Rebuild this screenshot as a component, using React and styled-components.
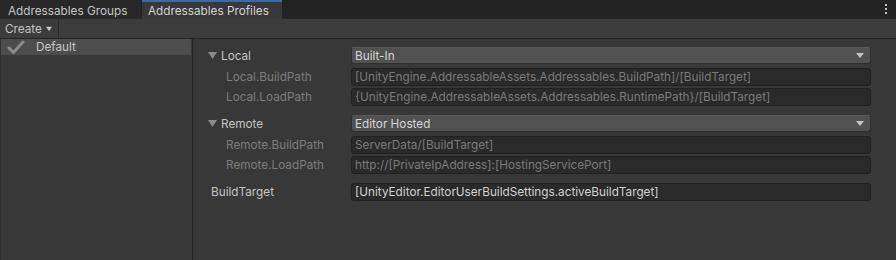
import React from "react";
import styled, { createGlobalStyle } from "styled-components";

const Global = createGlobalStyle`
  html, body { margin: 0; padding: 0; background: #383838; }
  body { font-family: Inter, "Noto Sans", sans-serif; font-size: 11.75px; color: #c4c4c4; }
  * { box-sizing: border-box; }
`;

const Window = styled.div`
  width: 896px;
  height: 260px;
  display: flex;
  flex-direction: column;
  background: #383838;
  overflow: hidden;
`;

const TabBar = styled.div`
  height: 19px;
  display: flex;
  align-items: stretch;
  background: #232323;
  position: relative;
`;

const Tab = styled.div`
  display: flex;
  align-items: center;
  padding-left: ${(p) => (p.$active ? "6px" : "8px")};
  padding-right: 14px;
  background: ${(p) => (p.$active ? "#383838" : "#282828")};
  color: ${(p) => (p.$active ? "#d2d2d2" : "#c4c4c4")};
  border-top: 2px solid ${(p) => (p.$active ? "#3e6aa4" : "#282828")};
  width: ${(p) => p.$w}px;
  white-space: nowrap;
  margin-right: ${(p) => (p.$active ? 0 : 1)}px;
`;

const Kebab = styled.div`
  position: absolute;
  right: 9px;
  top: 4px;
  display: flex;
  flex-direction: column;
  gap: 2px;
  span {
    width: 2px;
    height: 2px;
    background: #bdbdbd;
  }
`;

const Toolbar = styled.div`
  height: 20px;
  display: flex;
  align-items: stretch;
  background: #3c3c3c;
  border-bottom: 1px solid #232323;
`;

const ToolButton = styled.div`
  display: flex;
  align-items: center;
  gap: 4px;
  padding: 1px 6px 0 5px;
  width: 59px;
  border-right: 1px solid #2a2a2a;
  color: #c4c4c4;
`;

const Main = styled.div`
  flex: 1;
  display: flex;
  min-height: 0;
`;

const ListPane = styled.div`
  width: 193px;
  border-left: 1px solid #2e2e2e;
  border-right: 1px solid #232323;
  padding-right: 1px;
  display: flex;
  flex-direction: column;
`;

const ListItem = styled.div`
  height: 16px;
  display: flex;
  align-items: center;
  gap: 11px;
  padding-left: 6px;
  background: ${(p) => (p.$selected ? "#4d4d4d" : "transparent")};
  color: #c4c4c4;
`;

const Inspector = styled.div`
  flex: 1;
  padding: 8px 25px 0 0;
  display: flex;
  flex-direction: column;
`;

const Group = styled.div`
  display: flex;
  flex-direction: column;
  gap: 2px;
  margin-bottom: ${(p) => p.$mb}px;
`;

const Row = styled.div`
  display: grid;
  grid-template-columns: 158px 1fr;
  align-items: center;
  height: ${(p) => p.$h || 18}px;
  margin-bottom: ${(p) => p.$mb || 0}px;
`;

const Label = styled.div`
  display: flex;
  align-items: center;
  gap: 4px;
  padding-left: ${(p) => p.$indent}px;
  color: ${(p) => (p.$dim ? "#7c7c7c" : "#c4c4c4")};
  white-space: nowrap;
`;

const Dropdown = styled.div`
  height: 17px;
  display: flex;
  align-items: center;
  justify-content: space-between;
  padding: 0 6px 0 3px;
  background: #515151;
  border: 1px solid #303030;
  border-top-color: #585858;
  border-radius: 3px;
  color: #d6d6d6;
`;

const Field = styled.div`
  height: 18px;
  display: flex;
  align-items: center;
  padding: 0 3px;
  background: #2a2a2a;
  border: 1px solid #212121;
  border-radius: 3px;
  color: ${(p) => (p.$dim ? "#7a7a7a" : "#d2d2d2")};
  white-space: nowrap;
  overflow: hidden;
`;

const DownTri = ({ color = "#c4c4c4", w = 8, h = 5 }) => (
  <svg width={w} height={h} viewBox={`0 0 ${w} ${h}`}>
    <polygon points={`0,0 ${w},0 ${w / 2},${h}`} fill={color} />
  </svg>
);

const Check = () => (
  <svg width="18" height="15" viewBox="0 0 18 15">
    <path d="M2 8 L6.5 12.5 L16 2" stroke="#8c8c8c" strokeWidth="3" fill="none" strokeLinecap="round" strokeLinejoin="round" />
  </svg>
);

export default function App() {
  return (
    <Window>
      <Global />
      <TabBar>
        <Tab $w={141}>Addressables Groups</Tab>
        <Tab $active $w={140}>Addressables Profiles</Tab>
        <Kebab>
          <span />
          <span />
          <span />
        </Kebab>
      </TabBar>
      <Toolbar>
        <ToolButton>
          Create <DownTri color="#c4c4c4" w={8} h={6} />
        </ToolButton>
      </Toolbar>
      <Main>
        <ListPane>
          <ListItem $selected>
            <Check />
            Default
          </ListItem>
        </ListPane>
        <Inspector>
          <Group $mb={9}>
            <Row $h={17} $mb={2}>
              <Label $indent={15}>
                <DownTri color="#8a8a8a" w={9} h={7} />
                Local
              </Label>
              <Dropdown>
                Built-In
                <DownTri color="#c4c4c4" w={8} h={5} />
              </Dropdown>
            </Row>
            <Row>
              <Label $indent={33} $dim>Local.BuildPath</Label>
              <Field $dim>[UnityEngine.AddressableAssets.Addressables.BuildPath]/[BuildTarget]</Field>
            </Row>
            <Row>
              <Label $indent={33} $dim>Local.LoadPath</Label>
              <Field $dim>{"{UnityEngine.AddressableAssets.Addressables.RuntimePath}/[BuildTarget]"}</Field>
            </Row>
          </Group>
          <Group $mb={9}>
            <Row $h={17} $mb={2}>
              <Label $indent={15}>
                <DownTri color="#8a8a8a" w={9} h={7} />
                Remote
              </Label>
              <Dropdown>
                Editor Hosted
                <DownTri color="#c4c4c4" w={8} h={5} />
              </Dropdown>
            </Row>
            <Row>
              <Label $indent={33} $dim>Remote.BuildPath</Label>
              <Field $dim>ServerData/[BuildTarget]</Field>
            </Row>
            <Row>
              <Label $indent={33} $dim>Remote.LoadPath</Label>
              <Field $dim>http://[PrivateIpAddress]:[HostingServicePort]</Field>
            </Row>
          </Group>
          <Row>
            <Label $indent={18}>BuildTarget</Label>
            <Field>[UnityEditor.EditorUserBuildSettings.activeBuildTarget]</Field>
          </Row>
        </Inspector>
      </Main>
    </Window>
  );
}
